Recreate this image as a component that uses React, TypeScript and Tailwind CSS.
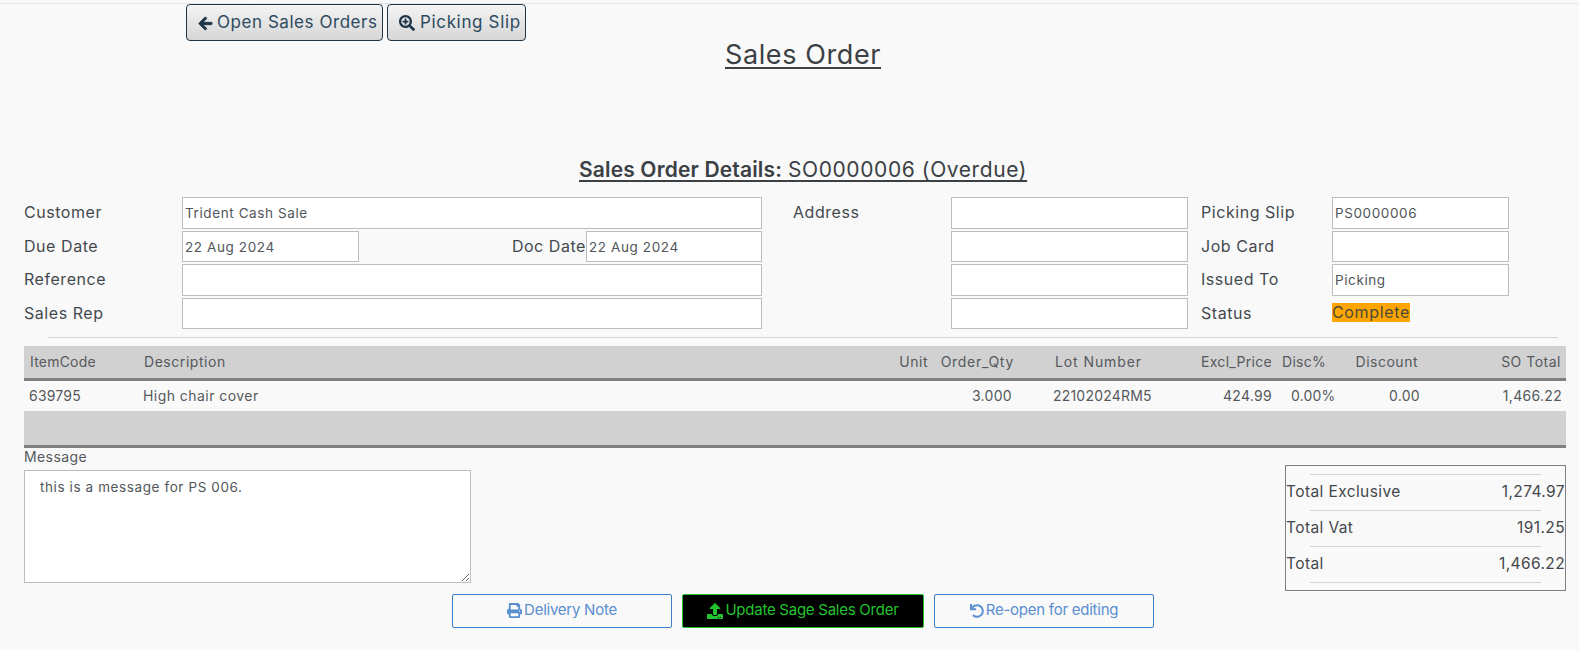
import React from "react";
import { FaArrowLeft, FaSearchPlus, FaPrint, FaUpload, FaUndo } from "react-icons/fa";

const font = "font-['Inter','Liberation_Sans',sans-serif]";

function Label({ children, className = "" }: { children: React.ReactNode; className?: string }) {
  return <label className={`pb-[2px] text-[16px] tracking-[0.55px] text-[#44494d] ${className}`}>{children}</label>;
}

function Field({ value = "", className = "" }: { value?: string; className?: string }) {
  return (
    <input
      readOnly
      value={value}
      className={`h-full border border-[#bdbdbd] bg-white px-[2px] text-[13.5px] tracking-[0.6px] text-[#50565a] outline-none ${className}`}
    />
  );
}

function TotalRow({ label, value }: { label: string; value: string }) {
  return (
    <>
      <div className="mx-[24px] h-px bg-[#d3d3d3]" />
      <div className="flex h-[35px] items-center justify-between text-[15.5px] tracking-[0.4px] text-[#44484c]">
        <span>{label}</span>
        <span>{value}</span>
      </div>
    </>
  );
}

export default function App() {
  return (
    <div className={`${font} h-[650px] overflow-hidden bg-[#f9f9f9] pt-[3px] text-[#3b4045]`}>
      <div className="h-px bg-[#e5e5e5]" />

      <div className="ml-[186px] flex h-[37px] gap-[4px]">
        <button className="flex w-[197px] items-center gap-[4px] rounded-[4px] border border-[#1d3549] bg-gradient-to-b from-[#f4f4f4] to-[#d6d6d6] pl-[11px] pt-[1px] text-[17px] tracking-[0.55px] text-[#2c4a60]">
          <FaArrowLeft className="h-[15px] w-[15px] stroke-[30] text-[#1d3549]" />
          Open Sales Orders
        </button>
        <button className="flex w-[139px] items-center gap-[5px] rounded-[4px] border border-[#1d3549] bg-gradient-to-b from-[#f4f4f4] to-[#d6d6d6] pl-[11px] pt-[1px] text-[17px] tracking-[0.65px] text-[#2c4a60]">
          <FaSearchPlus className="h-[16px] w-[16px] text-[#1d3549]" />
          Picking Slip
        </button>
      </div>

      <h1 className="ml-[725px] mt-[-4px] w-max text-[27px] leading-[36px] tracking-[0.6px] text-[#3b4045] underline underline-offset-[3px]">
        Sales Order
      </h1>

      <h2 className="ml-[579px] mt-[82px] w-max text-[21px] leading-[30px] text-[#3b4045] underline underline-offset-[3px]">
        <b className="font-semibold tracking-[0.15px]">Sales Order Details:</b>{" "}
        <span className="tracking-[0.6px]">SO0000006 (Overdue)</span>
      </h2>

      <div className="ml-[24px] mt-[12px] grid w-[1485px] grid-cols-[158px_580px_31px_158px_237px_13px_131px_177px] grid-rows-[32px_31px_32px_31px] gap-y-[2px]">
        <Label className="self-center">Customer</Label>
        <Field value="Trident Cash Sale" className="w-full" />
        <div />
        <Label className="self-center">Address</Label>
        <Field className="w-full" />
        <div />
        <Label className="self-center">Picking Slip</Label>
        <Field value="PS0000006" className="w-full" />

        <Label className="self-center">Due Date</Label>
        <div className="flex h-full items-center">
          <Field value="22 Aug 2024" className="w-[177px]" />
          <Label className="ml-auto self-center">Doc Date</Label>
          <Field value="22 Aug 2024" className="w-[176px]" />
        </div>
        <div />
        <div />
        <Field className="w-full" />
        <div />
        <Label className="self-center">Job Card</Label>
        <Field className="w-full" />

        <Label className="self-center">Reference</Label>
        <Field className="w-full" />
        <div />
        <div />
        <Field className="w-full" />
        <div />
        <Label className="self-center">Issued To</Label>
        <Field value="Picking" className="w-full" />

        <Label className="self-center">Sales Rep</Label>
        <Field className="w-full" />
        <div />
        <div />
        <Field className="w-full" />
        <div />
        <Label className="self-center">Status</Label>
        <div className="self-center pb-[2px]">
          <span className="block h-[19px] w-max bg-[#ffa500] text-[16px] leading-[19px] tracking-[0.65px] text-[#4a4a3a]">
            Complete
          </span>
        </div>
      </div>

      <div className="ml-[48px] mr-[21px] mt-[8px] h-px bg-[#d3d3d3]" />

      <table className="ml-[24px] mt-[8px] w-[1542px] table-fixed border-collapse text-[14px] tracking-[0.5px] text-[#55595d]">
        <colgroup>
          <col className="w-[115px]" />
          <col className="w-[741px]" />
          <col className="w-[52px]" />
          <col className="w-[88px]" />
          <col className="w-[150px]" />
          <col className="w-[108px]" />
          <col className="w-[62px]" />
          <col className="w-[85px]" />
          <col className="w-[141px]" />
        </colgroup>
        <thead>
          <tr className="h-[33px] border-b-[3px] border-[#808080] bg-[#d1d1d1]">
            <th className="pl-[6px] text-left font-normal tracking-[0.2px]">ItemCode</th>
            <th className="pl-[5px] text-left font-normal tracking-[0.55px]">Description</th>
            <th className="pr-[4px] text-right font-normal">Unit</th>
            <th className="pr-[6px] text-right font-normal tracking-[0.7px]">Order_Qty</th>
            <th className="pl-[35px] text-left font-normal tracking-[0.9px]">Lot Number</th>
            <th className="pr-[6px] text-right font-normal tracking-[0.3px]">Excl_Price</th>
            <th className="pl-[4px] text-left font-normal tracking-[0.3px]">Disc%</th>
            <th className="pr-[7px] text-right font-normal">Discount</th>
            <th className="pr-[5px] text-right font-normal">SO Total</th>
          </tr>
        </thead>
        <tbody>
          <tr className="h-[32px] tracking-[0.3px]">
            <td className="pl-[5px] tracking-[0.2px]">639795</td>
            <td className="pl-[4px] tracking-[0.45px]">High chair cover</td>
            <td />
            <td className="pr-[8px] text-right">3.000</td>
            <td className="pl-[33px] tracking-[0.2px]">22102024RM5</td>
            <td className="pr-[6px] text-right">424.99</td>
            <td className="pl-[13px] tracking-[0.2px]">0.00%</td>
            <td className="pr-[5px] text-right">0.00</td>
            <td className="pr-[4px] text-right">1,466.22</td>
          </tr>
          <tr className="h-[35px] border-b-[3px] border-[#808080] bg-[#d1d1d1]">
            <td colSpan={9} />
          </tr>
        </tbody>
      </table>

      <div className="ml-[24px] mr-[13px] flex items-start justify-between">
        <div>
          <div className="h-[22px] text-[14px] leading-[17px] tracking-[0.4px] text-[#55595d]">Message</div>
          <textarea
            readOnly
            value="this is a message for PS 006."
            className="block h-[113px] w-[447px] border border-[#bdbdbd] bg-white px-[15px] py-[6px] text-[13.5px] tracking-[0.6px] text-[#50565a] outline-none"
          />
        </div>
        <div className="mt-[17px] h-[126px] w-[281px] border border-[#808080] pt-[8px]">
          <TotalRow label="Total Exclusive" value="1,274.97" />
          <TotalRow label="Total Vat" value="191.25" />
          <TotalRow label="Total" value="1,466.22" />
          <div className="mx-[24px] h-px bg-[#d3d3d3]" />
        </div>
      </div>

      <div className="ml-[452px] mt-[3px] flex gap-[10px] text-[15px] tracking-[-0.25px]">
        <button className="flex h-[34px] w-[220px] items-center justify-center gap-[2px] rounded-[2px] border border-[#3b7fc4] text-[#5a8fd0]">
          <FaPrint className="h-[15px] w-[15px]" />
          Delivery Note
        </button>
        <button className="flex h-[34px] w-[242px] items-center justify-center gap-[2px] rounded-[2px] border border-[#22c32e] bg-black text-[#22c32e]">
          <FaUpload className="h-[16px] w-[16px]" />
          Update Sage Sales Order
        </button>
        <button className="flex h-[34px] w-[220px] items-center justify-center gap-[2px] rounded-[2px] border border-[#3b7fc4] text-[#5a8fd0]">
          <FaUndo className="h-[14px] w-[14px]" />
          Re-open for editing
        </button>
      </div>
    </div>
  );
}
